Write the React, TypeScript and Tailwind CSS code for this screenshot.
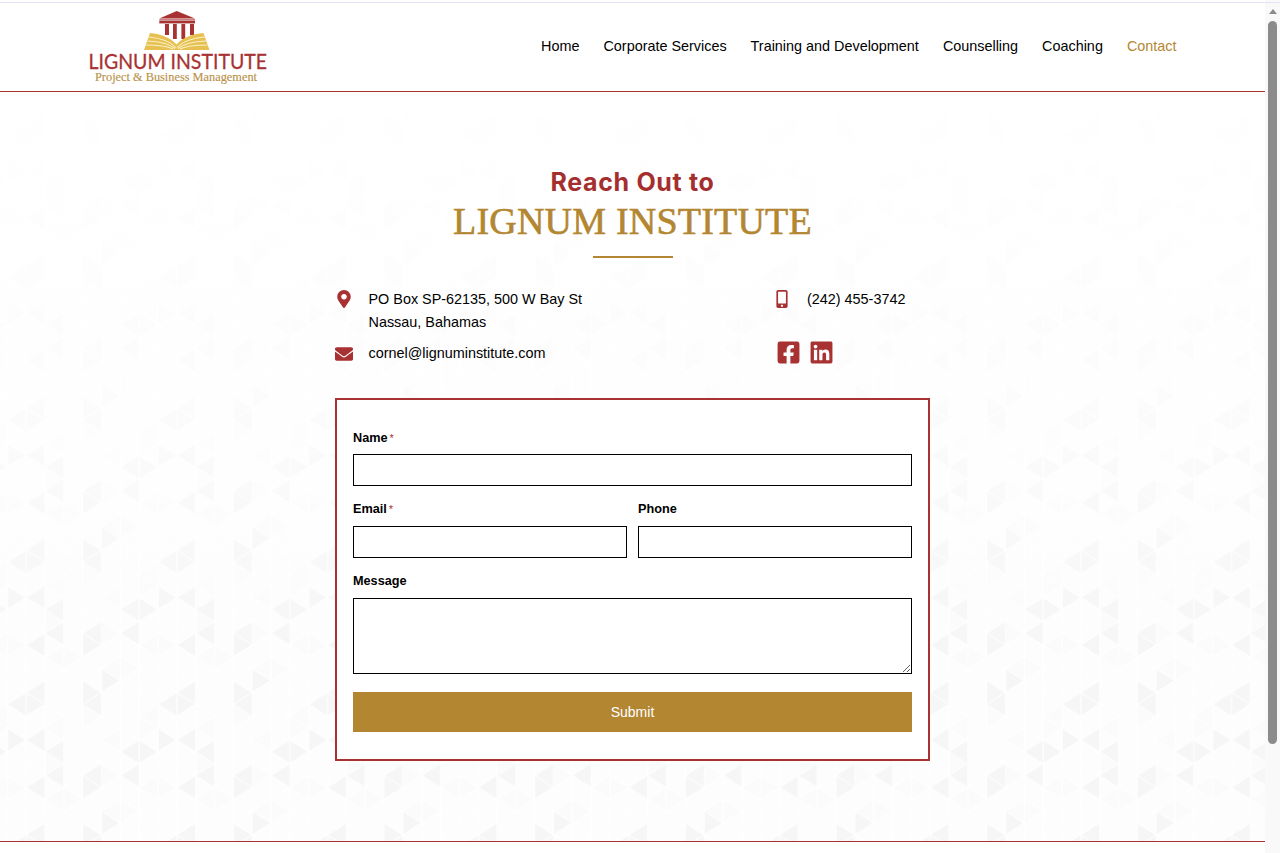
import React from "react";
import { FaMapMarkerAlt, FaEnvelope, FaMobileAlt, FaFacebookSquare, FaLinkedin } from "react-icons/fa";

const CW = 18.833;
const RH = 11.86;
const TW = CW * 8;
const TH = RH * 12;
const darkR = new Set(["5-3", "4-4", "4-0", "0-8", "7-9", "1-5"]);
const darkL = new Set(["5-5", "1-5", "2-4", "3-9", "7-9", "3-11", "5-11", "7-11", "2-0", "2-8"]);

function triangles() {
  const out: React.ReactElement[] = [];
  for (let k = -1; k <= 8; k++) {
    for (let n = -2; n <= 14; n++) {
      if ((k + n + 2) % 2 !== 0) continue;
      const km = ((k % 8) + 8) % 8;
      const nm = ((n % 12) + 12) % 12;
      const key = `${km}-${nm}`;
      const x = k * CW;
      const y = n * RH;
      const soft = (km * 3 + nm * 5) % 7 === 0;
      const softL = (km * 5 + nm * 3) % 9 === 0;
      out.push(
        <polygon key={`r${k}_${n}`} points={`${x},${y - RH} ${x},${y + RH} ${x + CW},${y}`} fill={darkR.has(key) ? "#f6f6f6" : soft ? "#fbfbfb" : "#fdfdfd"} stroke="#ffffff" strokeWidth="0.8" />
      );
      out.push(
        <polygon key={`l${k}_${n}`} points={`${x},${y - RH} ${x},${y + RH} ${x - CW},${y}`} fill={darkL.has(key) ? "#f6f6f6" : softL ? "#fbfbfb" : "#fdfdfd"} stroke="#ffffff" strokeWidth="0.8" />
      );
    }
  }
  return out;
}

function Pattern() {
  return (
    <svg className="absolute inset-0 w-full h-full" aria-hidden="true">
      <defs>
        <pattern id="tri" width={TW} height={TH} patternUnits="userSpaceOnUse" patternTransform="translate(7.33 75.8)">
          {triangles()}
        </pattern>
        <linearGradient id="fade" gradientUnits="userSpaceOnUse" x1="0" y1="92" x2="0" y2="660">
          <stop offset="0" stopColor="#ffffff" stopOpacity="0.97" />
          <stop offset="0.55" stopColor="#ffffff" stopOpacity="0.62" />
          <stop offset="1" stopColor="#ffffff" stopOpacity="0" />
        </linearGradient>
      </defs>
      <rect width="100%" height="100%" fill="url(#tri)" />
      <rect width="100%" height="100%" fill="url(#fade)" />
    </svg>
  );
}

function Logo() {
  return (
    <svg width="190" height="80" viewBox="85 8 190 80" className="block">
      <polygon points="159.3,18.5 176.7,11 195,18.5" fill="#a83232" />
      <rect x="159.3" y="19" width="35.7" height="1.6" fill="#c98080" />
      <rect x="159.3" y="20.8" width="35.7" height="2.6" fill="#a83232" />
      <rect x="165" y="24" width="4" height="11" fill="#a83232" />
      <rect x="173" y="24" width="3.8" height="15" fill="#a83232" />
      <rect x="181.4" y="24" width="3.8" height="15" fill="#a83232" />
      <rect x="190" y="24" width="4" height="11" fill="#a83232" />
      <path d="M150 33 C161 34 171 38 176.5 44.5 C182 38 192 34 203.5 33 L209.5 50 L144 50 Z" fill="#e6c152" />
      <path d="M148.8 37 C159 38 170 41 176 47.5 M147.4 41 C158 41.5 168 43 175 48.5 M146 45 C156 45 166 45.5 173 49 M204.7 37 C194 38 183 41 177 47.5 M206 41 C195 41.5 185 43 178 48.5 M207.5 45 C197 45 187 45.5 180 49" fill="none" stroke="#fbf0c4" strokeWidth="1.1" />
      <text x="88.5" y="69" fontFamily="Lato, sans-serif" fontSize="21.5" fill="#a83232" stroke="#a83232" strokeWidth="0.3" textLength="178.5" lengthAdjust="spacingAndGlyphs">LIGNUM INSTITUTE</text>
      <text x="95" y="80.5" fontFamily="'Liberation Serif', serif" fontSize="12.5" fill="#b9924a" stroke="#b9924a" strokeWidth="0.15" textLength="162" lengthAdjust="spacingAndGlyphs">Project &amp; Business Management</text>
    </svg>
  );
}

function Field({ label, required, className, children }: { label: string; required?: boolean; className?: string; children: React.ReactNode }) {
  return (
    <div className={className}>
      <label className="flex items-center h-[18px] text-[12.7px] leading-[18px] font-bold text-black">
        {label}
        {required && <span className="ml-[2px] text-[#a83232] text-[11px] font-normal">*</span>}
      </label>
      {children}
    </div>
  );
}

const inputCls = "block w-full h-8 mt-2 border border-black bg-white outline-none";

export default function App() {
  const nav = ["Home", "Corporate Services", "Training and Development", "Counselling", "Coaching"];
  return (
    <div className="relative flex w-[1280px] h-[853px] overflow-hidden bg-white font-['Liberation_Sans',Arial,sans-serif] text-black">
      <div className="relative w-[1265px] h-[853px] shrink-0">
        <div className="absolute left-0 right-0 top-0 h-[841px]"><Pattern /></div>
        <div className="relative">
          <header className="h-[92px] bg-white border-b border-[#a83232] pt-[8px] pl-[85px] pr-[88.5px] flex items-start justify-between">
            <Logo />
            <nav className="flex items-center gap-6 h-[76px] text-[14.4px] leading-5">
              {nav.map((n) => (
                <span key={n}>{n}</span>
              ))}
              <span className="text-[#b38631]">Contact</span>
            </nav>
          </header>

          <main className="h-[750px] border-b border-[#a83232] pt-[74px]">
            <div className="text-center font-['Inter',sans-serif] font-bold text-[25px] leading-[32px] tracking-[0.65px] text-[#a52f2f]">Reach Out to</div>
            <div className="mt-[1px] text-center font-['Liberation_Serif',serif] text-[38px] leading-[44px] tracking-[0.2px] text-[#b38631] [-webkit-text-stroke:0.6px_#b38631]">LIGNUM INSTITUTE</div>
            <div className="mx-auto mt-[13px] w-20 h-[2px] bg-[#b38631]" />

            <div className="mx-auto w-[595px] mt-[30px]">
              <div className="flex h-[77px] text-[14.4px] leading-[23px]">
                <div className="w-[441px] flex flex-col gap-2">
                  <div className="flex items-start">
                    <div className="w-[33.5px] shrink-0 pl-[2px] pt-[2px]"><FaMapMarkerAlt className="w-[14px] h-[18px] text-[#a83232]" /></div>
                    <div>PO Box SP-62135, 500 W Bay St<br />Nassau, Bahamas</div>
                  </div>
                  <div className="flex items-center">
                    <div className="w-[33.5px] shrink-0"><FaEnvelope className="w-[18px] h-[18px] text-[#a83232]" /></div>
                    <div>cornel@lignuminstitute.com</div>
                  </div>
                </div>
                <div className="flex flex-col">
                  <div className="flex items-start">
                    <div className="w-[31px] shrink-0 pt-[2px]"><FaMobileAlt className="w-[12px] h-[18px] text-[#a83232]" /></div>
                    <div>(242) 455-3742</div>
                  </div>
                  <div className="flex gap-2 mt-[31px] -ml-[0.5px]">
                    <FaFacebookSquare className="w-[25px] h-[25px] -my-[2px] text-[#a83232]" />
                    <FaLinkedin className="w-[25px] h-[25px] -my-[2px] text-[#a83232]" />
                  </div>
                </div>
              </div>

              <form className="mt-[33px] h-[363px] border-2 border-[#a83232] bg-white px-4 pt-[29px]">
                <Field label="Name" required>
                  <input className="block w-full h-8 mt-[7px] border border-black bg-white outline-none" />
                </Field>
                <div className="flex gap-[11px] mt-[14px]">
                  <Field label="Email" required className="flex-1">
                    <input className={inputCls} />
                  </Field>
                  <Field label="Phone" className="flex-1">
                    <input className={inputCls} />
                  </Field>
                </div>
                <Field label="Message" className="mt-[14px]">
                  <textarea className="block w-full h-[76px] mt-2 border border-black bg-white outline-none resize-y" />
                </Field>
                <button type="button" className="block w-full h-10 mt-[18px] bg-[#b38631] text-white text-[14px]">Submit</button>
              </form>
            </div>
          </main>
        </div>
      </div>

      <div className="w-[15px] shrink-0 bg-[#f9f9f9] flex flex-col items-center">
        <div className="mt-[9px] w-0 h-0 border-x-[4.5px] border-x-transparent border-b-[5px] border-b-[#8b8b8b]" />
        <div className="mt-[7px] w-[9px] h-[723px] rounded-full bg-[#8b8b8b]" />
      </div>

      <div className="absolute left-0 right-0 top-[2px] h-px bg-[#e4e4f7]" />
    </div>
  );
}
